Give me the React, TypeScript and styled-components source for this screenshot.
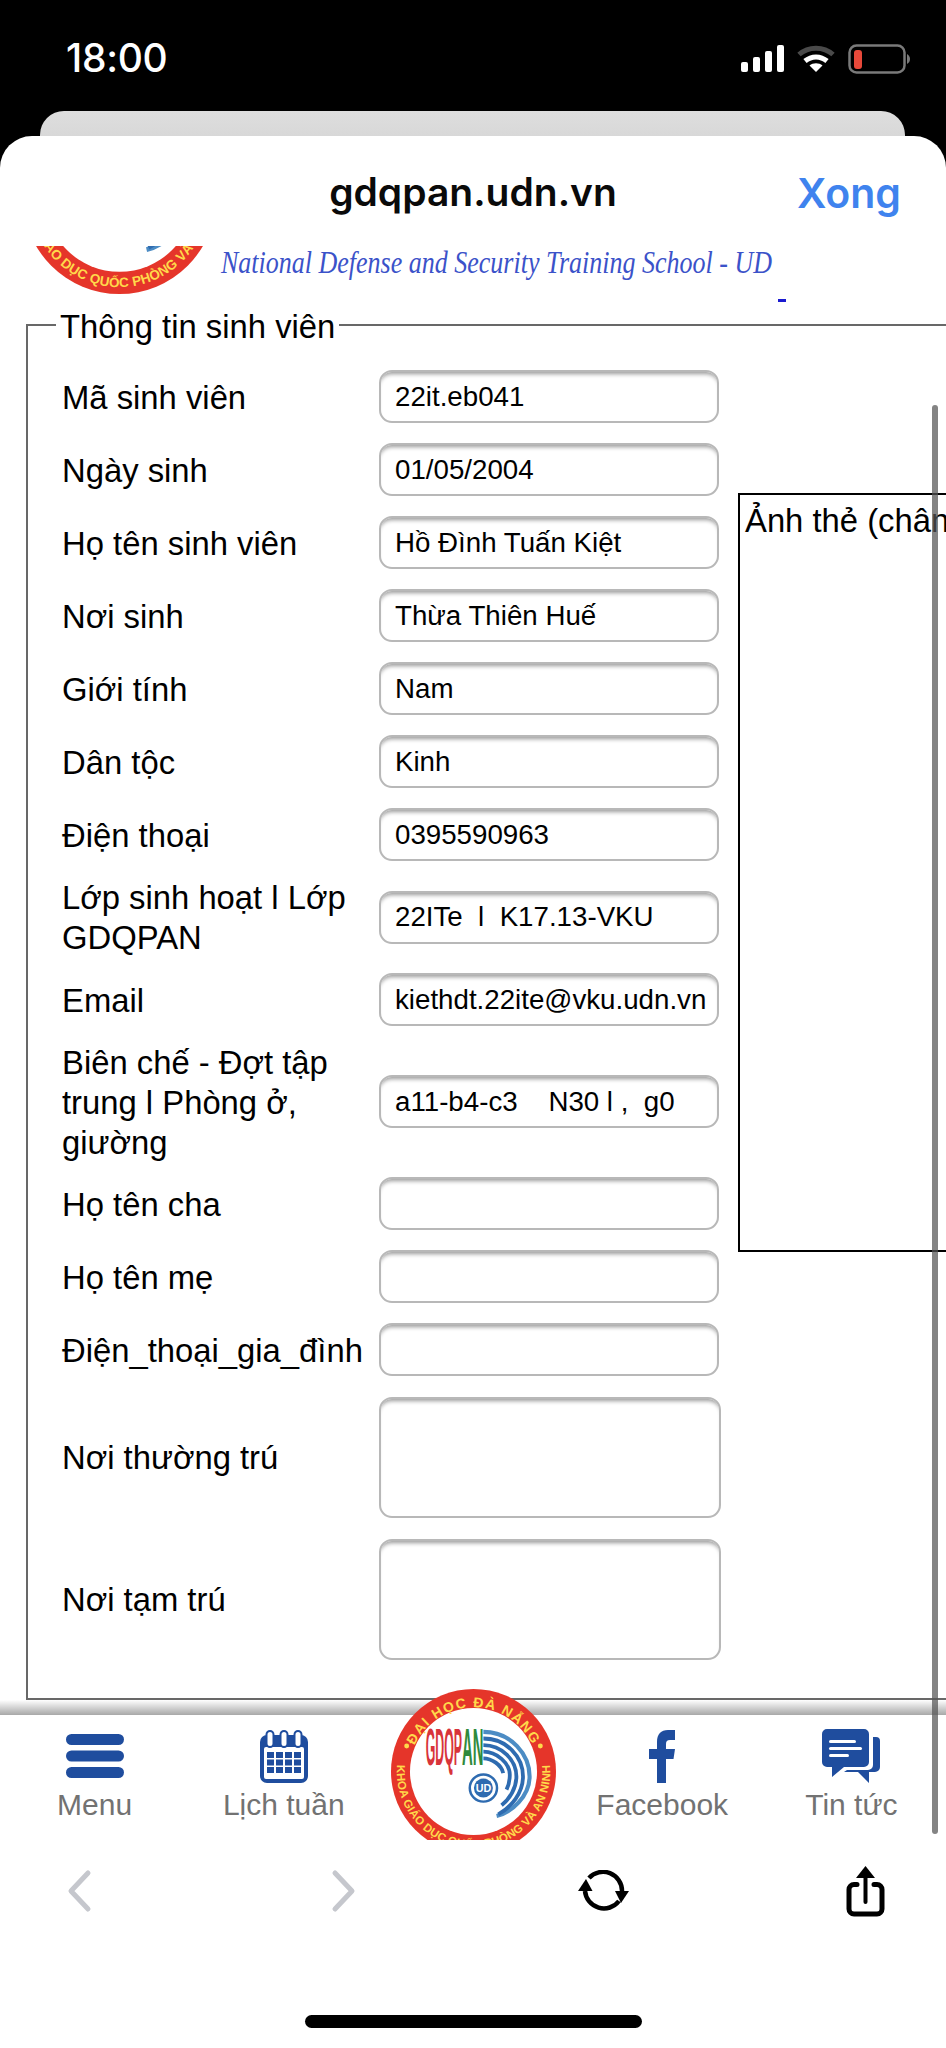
import React from "react";
import styled, { createGlobalStyle } from "styled-components";

const Global = createGlobalStyle`
  html, body { margin: 0; padding: 0; background: #000; }
  body { font-family: "Liberation Sans", Arial, sans-serif; }
  * { box-sizing: border-box; }
`;

const Phone = styled.div`
  width: 946px;
  height: 2048px;
  background: #000;
  display: flex;
  flex-direction: column;
  overflow: hidden;
`;

const StatusBar = styled.header`
  height: 111px;
  flex: none;
  display: flex;
  justify-content: space-between;
  align-items: flex-start;
  padding: 38px 36px 0 66px;
  color: #fff;
`;

const Time = styled.span`
  font-family: Inter, sans-serif;
  font-size: 39px;
  font-weight: 500;
  line-height: 40px;
  letter-spacing: -0.3px;
`;

const StatusIcons = styled.div`
  display: flex;
  align-items: center;
  gap: 13px;
  padding-top: 6px;
`;

const PeekCard = styled.div`
  flex: none;
  height: 25px;
  margin: 0 41px 0 40px;
  background: linear-gradient(#dedede, #d8d8d8);
  border-radius: 24px 24px 0 0;
`;

const Sheet = styled.div`
  position: relative;
  flex: 1;
  min-height: 0;
  background: #fff;
  border-radius: 32px 32px 0 0;
  display: flex;
  flex-direction: column;
  overflow: hidden;
`;

const SheetHeader = styled.div`
  flex: none;
  height: 110px;
  padding: 0 45px 0 0;
  position: relative;
  display: flex;
  align-items: center;
  justify-content: flex-end;
`;

const SheetTitle = styled.h1`
  position: absolute;
  left: 0;
  right: 0;
  top: 32px;
  margin: 0;
  text-align: center;
  font-family: Inter, sans-serif;
  font-size: 39px;
  line-height: 48px;
  font-weight: 600;
  color: #0a0a0a;
`;

const DoneLink = styled.span`
  font-family: Inter, sans-serif;
  font-size: 41px;
  line-height: 48px;
  font-weight: 600;
  color: #3f83ee;
  margin-top: 4px;
`;

const Content = styled.main`
  flex: 1;
  min-height: 0;
  overflow: hidden;
`;

const Banner = styled.div`
  height: 58px;
  display: flex;
  align-items: flex-start;
`;

const BannerSeal = styled.div`
  flex: none;
  width: 193px;
  height: 193px;
  margin: -145px 0 0 23px;
`;

const BannerText = styled.span`
  flex: none;
  margin: -2px 0 0 5px;
  font-family: "Liberation Serif", serif;
  font-style: italic;
  font-size: 26px;
  line-height: 38px;
  color: #3b52c9;
  white-space: nowrap;
  transform: scaleY(1.2);
`;

const BannerDash = styled.span`
  flex: none;
  width: 8px;
  height: 3px;
  margin: 53px 0 0 6px;
  background: #1a1ad0;
`;

const Field = styled.fieldset`
  width: 1100px;
  margin: 0 0 0 26px;
  padding: 25px 0 38px 34px;
  border: 2px solid #686868;
  display: flex;
  min-width: 0;
`;

const Legend = styled.legend`
  margin-left: -6px;
  padding: 4px 4px 0;
  font-size: 32.8px;
  line-height: 37px;
  color: #000;
`;

const FieldBody = styled.div`
  display: flex;
  align-items: flex-start;
`;

const Rows = styled.div`
  width: 659px;
  display: flex;
  flex-direction: column;
  gap: 20px;
`;

const Row = styled.div<{ $h: number }>`
  display: flex;
  align-items: center;
  height: ${(p) => p.$h}px;
`;

const Label = styled.label`
  flex: none;
  width: 317px;
  font-size: 32.8px;
  line-height: 40px;
  color: #000;
  padding: 2px 4px 0 0;
`;

const TextInput = styled.input`
  flex: none;
  width: 340px;
  height: 53px;
  padding: 0 2px 0 14px;
  border: 2px solid #b8b8b8;
  border-radius: 13px;
  background: #fff;
  box-shadow: inset 0 5px 4px -3px rgba(0, 0, 0, 0.4);
  font-family: "Liberation Sans", Arial, sans-serif;
  font-size: 27.7px;
  color: #000;
  outline: none;
`;

const TextArea = styled.textarea`
  flex: none;
  width: 342px;
  height: 121px;
  margin-top: 1px;
  padding: 8px 15px;
  border: 2px solid #b8b8b8;
  border-radius: 13px;
  background: #fff;
  box-shadow: inset 0 5px 4px -3px rgba(0, 0, 0, 0.4);
  resize: none;
  outline: none;
`;

const Photo = styled.div`
  flex: none;
  width: 400px;
  height: 759px;
  margin: 123px 0 0 17px;
  padding: 7px 5px;
  border: 2px solid #000;
  font-size: 32.8px;
  line-height: 38px;
  white-space: nowrap;
  overflow: hidden;
`;

const Nav = styled.nav`
  position: relative;
  z-index: 2;
  flex: none;
  height: 125px;
  background: #fff;
  display: grid;
  grid-template-columns: repeat(5, 1fr);

  &::before {
    content: "";
    position: absolute;
    left: 0;
    right: 0;
    top: -15px;
    height: 15px;
    background: linear-gradient(rgba(0, 0, 0, 0), rgba(0, 0, 0, 0.34));
  }
`;

const NavItem = styled.div`
  display: flex;
  flex-direction: column;
  align-items: center;
  padding-top: 14px;
`;

const NavIcon = styled.div`
  height: 54px;
  display: flex;
  align-items: center;
  justify-content: center;
`;

const NavLabel = styled.span`
  margin-top: 4px;
  font-size: 30px;
  line-height: 36px;
  color: #727272;
  white-space: nowrap;
`;

const NavSeal = styled.div`
  position: absolute;
  left: 391px;
  bottom: 0;
  width: 165px;
  height: 151px;
  overflow: hidden;
  z-index: 3;
`;

const Toolbar = styled.div`
  flex: none;
  height: 208px;
  display: flex;
  flex-direction: column;
  align-items: center;
  background: #fff;
`;

const ToolRow = styled.div`
  width: 100%;
  padding: 21px 52px 0 51px;
  display: flex;
  justify-content: space-between;
`;

const ToolSlot = styled.div`
  width: 56px;
  height: 60px;
  display: flex;
  align-items: center;
  justify-content: center;
`;

const HomeBar = styled.div`
  width: 337px;
  height: 13px;
  margin-top: auto;
  margin-bottom: 20px;
  border-radius: 7px;
  background: #000;
`;

const ScrollThumb = styled.div`
  position: absolute;
  z-index: 4;
  top: 269px;
  right: 8px;
  width: 6px;
  height: 1429px;
  border-radius: 3px;
  background: rgba(85, 85, 85, 0.72);
`;

const Signal = () => (
  <svg width="43" height="28" viewBox="0 0 43 28" fill="#fff">
    <rect x="0" y="17" width="7" height="10" rx="2" />
    <rect x="12" y="12" width="7" height="15" rx="2" />
    <rect x="24" y="6" width="7" height="21" rx="2" />
    <rect x="36" y="0" width="7" height="27" rx="2" />
  </svg>
);

const Wifi = () => (
  <svg width="38" height="28" viewBox="0 0 38 28" fill="none">
    <path d="M2 9.5C11.5 1 26.5 1 36 9.5" stroke="#4a4a4a" strokeWidth="5" />
    <path d="M8 16C14.5 10.5 23.5 10.5 30 16" stroke="#fff" strokeWidth="5" />
    <path d="M19 27L12.5 20.5C16 17.5 22 17.5 25.5 20.5Z" fill="#fff" />
  </svg>
);

const Battery = () => (
  <svg width="62" height="30" viewBox="0 0 62 30" fill="none">
    <rect x="1.5" y="1.5" width="55" height="27" rx="7" stroke="#7a7a7a" strokeWidth="2.5" />
    <rect x="6" y="6" width="8" height="19" rx="3" fill="#e8493a" />
    <path d="M59 10C61 11 62 13 62 15S61 19 59 20Z" fill="#7a7a7a" />
  </svg>
);

const MenuIcon = () => (
  <svg width="58" height="44" viewBox="0 0 58 44" fill="#1f4d9e">
    <rect x="0" y="0" width="58" height="11" rx="5.5" />
    <rect x="0" y="16.5" width="58" height="11" rx="5.5" />
    <rect x="0" y="33" width="58" height="11" rx="5.5" />
  </svg>
);

const CalendarIcon = () => {
  const cells: React.ReactElement[] = [];
  for (let r = 0; r < 3; r++) {
    for (let c = 0; c < 4; c++) {
      cells.push(<rect key={`${r}-${c}`} x={7 + c * 9} y={22 + r * 7.5} width="7" height="6" />);
    }
  }
  return (
    <svg width="48" height="53" viewBox="0 0 48 53" fill="#1f4d9e">
      <rect x="0" y="5" width="48" height="48" rx="7" />
      <rect x="4" y="17" width="40" height="32" rx="2" fill="#fff" />
      {[10, 24, 38].map((x) => (
        <rect key={x} x={x - 3.5} y="1" width="7" height="16" rx="3.5" fill="#fff" stroke="#1f4d9e" strokeWidth="2" />
      ))}
      {cells}
    </svg>
  );
};

const FacebookIcon = () => (
  <svg width="26" height="53" viewBox="0 0 26 53" fill="#1f4d9e">
    <path d="M8 53V29H0V19H8V12C8 4 12 0 19 0H26V10H21C18 10 17 11.5 17 14V19H26L24.5 29H17V53Z" />
  </svg>
);

const ChatIcon = () => (
  <svg width="58" height="54" viewBox="0 0 58 54" fill="#1f4d9e">
    <path d="M5 0H42A5 5 0 0 1 47 5V33A5 5 0 0 1 42 38H22L10 48V38H5A5 5 0 0 1 0 33V5A5 5 0 0 1 5 0Z" />
    <path d="M51 8H54A4 4 0 0 1 58 12V38A5 5 0 0 1 53 43H47V54L36 43H22L25 41H46A5 5 0 0 0 51 36Z" />
    <rect x="7" y="11" width="27" height="3" rx="1.5" fill="#fff" />
    <rect x="7" y="18" width="33" height="3" rx="1.5" fill="#fff" />
    <rect x="7" y="25" width="20" height="3" rx="1.5" fill="#fff" />
  </svg>
);

const Chevron = ({ flip }: { flip?: boolean }) => (
  <svg width="24" height="40" viewBox="0 0 24 40" fill="none" stroke="#c5c7cd" strokeWidth="5" strokeLinecap="round" strokeLinejoin="round" overflow="visible">
    <path d={flip ? "M6 2L23 20L6 38" : "M21 2L4 20L21 38"} />
  </svg>
);

const ReloadIcon = () => (
  <svg width="52" height="42" viewBox="0 0 52 42" fill="none">
    <path d="M11 8A19 19 0 0 1 44 21" stroke="#000" strokeWidth="4.5" />
    <path d="M41 31A19 19 0 0 1 7 21" stroke="#000" strokeWidth="4.5" />
    <path d="M37 21H51L43 33Z" fill="#000" />
    <path d="M0 21H14.5L8 9Z" fill="#000" />
  </svg>
);

const ShareIcon = () => (
  <svg width="39" height="51" viewBox="0 0 39 51" fill="none">
    <path d="M11 18.5H8A5 5 0 0 0 3 23.5V43A5 5 0 0 0 8 48H31A5 5 0 0 0 36 43V23.5A5 5 0 0 0 31 18.5H28" stroke="#000" strokeWidth="5" strokeLinecap="round" />
    <path d="M19.5 10V36" stroke="#000" strokeWidth="4" strokeLinecap="round" />
    <path d="M10 12H29L19.5 0Z" fill="#000" />
  </svg>
);

const Seal = ({ id }: { id: string }) => (
  <svg width="100%" viewBox="0 0 200 200">
    <defs>
      <path id={`${id}-top`} d="M22 100A78 78 0 0 1 178 100" />
      <path id={`${id}-bot`} d="M10.4 75A93 93 0 1 0 189.6 75" />
    </defs>
    <circle cx="100" cy="100" r="100" fill="#e5352a" />
    <circle cx="100" cy="100" r="77" fill="#fff" />
    <g fontFamily="'Liberation Sans', Arial, sans-serif" fontWeight="700" fill="#ffd94a">
      <text fontSize="17" letterSpacing="1.6">
        <textPath href={`#${id}-top`} startOffset="50%" textAnchor="middle">ĐẠI HỌC ĐÀ NẴNG</textPath>
      </text>
      <text fontSize="14" letterSpacing="0.2">
        <textPath href={`#${id}-bot`} startOffset="50%" textAnchor="middle">KHOA GIÁO DỤC QUỐC PHÒNG VÀ AN NINH</textPath>
      </text>
    </g>
    <circle cx="19" cy="69" r="3" fill="#ffd94a" />
    <circle cx="181" cy="69" r="3" fill="#ffd94a" />
    <g fontFamily="'Liberation Sans', Arial, sans-serif" fontWeight="700" fontSize="62">
      <text x="42" y="92" fill="#d8343a" textLength="44" lengthAdjust="spacingAndGlyphs">GDQP</text>
      <text x="86" y="92" fill="#2f8a3c" textLength="26" lengthAdjust="spacingAndGlyphs">AN</text>
    </g>
    <g fill="none" stroke="#2e6bb0" strokeWidth="4.6">
      <path d="M112 52C146 52 168 80 168 106C168 130 146 150 128 154" strokeWidth="5" stroke="#4c8cc4" />
      <path d="M112 60C140 60 160 82 160 106C160 126 146 143 130 152" />
      <path d="M112 68C134 68 152 86 152 106C152 120 144 133 134 141" />
      <path d="M112 76C128 76 144 90 144 104C144 112 142 118 140 122" />
      <path d="M112 84C122 84 134 92 136 102" />
    </g>
    <circle cx="112" cy="120" r="16.5" fill="#fff" stroke="#2e6bb0" strokeWidth="3" />
    <circle cx="112" cy="120" r="11.5" fill="#2e6bb0" />
    <text x="112" y="125" textAnchor="middle" fontFamily="'Liberation Sans', Arial, sans-serif" fontWeight="700" fontSize="13" fill="#fff">UD</text>
  </svg>
);

type FieldRow = { label: React.ReactNode; value: string; h?: number };

const rows: FieldRow[] = [
  { label: "Mã sinh viên", value: "22it.eb041" },
  { label: "Ngày sinh", value: "01/05/2004" },
  { label: "Họ tên sinh viên", value: "Hồ Đình Tuấn Kiệt" },
  { label: "Nơi sinh", value: "Thừa Thiên Huế" },
  { label: "Giới tính", value: "Nam" },
  { label: "Dân tộc", value: "Kinh" },
  { label: "Điện thoại", value: "0395590963" },
  { label: "Lớp sinh hoạt l Lớp GDQPAN", value: "22ITe  l  K17.13-VKU", h: 72 },
  { label: "Email", value: "kiethdt.22ite@vku.udn.vn" },
  { label: "Biên chế - Đợt tập trung l Phòng ở, giường", value: "a11-b4-c3    N30 l ,  g0", h: 111 },
  { label: "Họ tên cha", value: "" },
  { label: "Họ tên mẹ", value: "" },
  { label: "Điện_thoại_gia_đình", value: "" },
];

export default function App() {
  return (
    <Phone>
      <Global />
      <StatusBar>
        <Time>18:00</Time>
        <StatusIcons>
          <Signal />
          <Wifi />
          <Battery />
        </StatusIcons>
      </StatusBar>
      <PeekCard />
      <Sheet>
        <SheetHeader>
          <SheetTitle>gdqpan.udn.vn</SheetTitle>
          <DoneLink>Xong</DoneLink>
        </SheetHeader>
        <Content>
          <Banner>
            <BannerSeal>
              <Seal id="banner" />
            </BannerSeal>
            <BannerText>National Defense and Security Training School - UD</BannerText>
            <BannerDash />
          </Banner>
          <Field>
            <Legend>Thông tin sinh viên</Legend>
            <FieldBody>
              <Rows>
                {rows.map((r, i) => (
                  <Row key={i} $h={r.h ?? 53}>
                    <Label>{r.label}</Label>
                    <TextInput readOnly value={r.value} />
                  </Row>
                ))}
                <Row $h={122}>
                  <Label>Nơi thường trú</Label>
                  <TextArea readOnly value="" />
                </Row>
                <Row $h={122}>
                  <Label>Nơi tạm trú</Label>
                  <TextArea readOnly value="" />
                </Row>
              </Rows>
              <Photo>Ảnh thẻ (chân dung)</Photo>
            </FieldBody>
          </Field>
        </Content>
        <Nav>
          <NavItem>
            <NavIcon><MenuIcon /></NavIcon>
            <NavLabel>Menu</NavLabel>
          </NavItem>
          <NavItem>
            <NavIcon><CalendarIcon /></NavIcon>
            <NavLabel>Lịch tuần</NavLabel>
          </NavItem>
          <div />
          <NavItem>
            <NavIcon><FacebookIcon /></NavIcon>
            <NavLabel>Facebook</NavLabel>
          </NavItem>
          <NavItem>
            <NavIcon><ChatIcon /></NavIcon>
            <NavLabel>Tin tức</NavLabel>
          </NavItem>
          <NavSeal>
            <Seal id="nav" />
          </NavSeal>
        </Nav>
        <Toolbar>
          <ToolRow>
            <ToolSlot><Chevron /></ToolSlot>
            <ToolSlot><Chevron flip /></ToolSlot>
            <ToolSlot><ReloadIcon /></ToolSlot>
            <ToolSlot><ShareIcon /></ToolSlot>
          </ToolRow>
          <HomeBar />
        </Toolbar>
        <ScrollThumb />
      </Sheet>
    </Phone>
  );
}
